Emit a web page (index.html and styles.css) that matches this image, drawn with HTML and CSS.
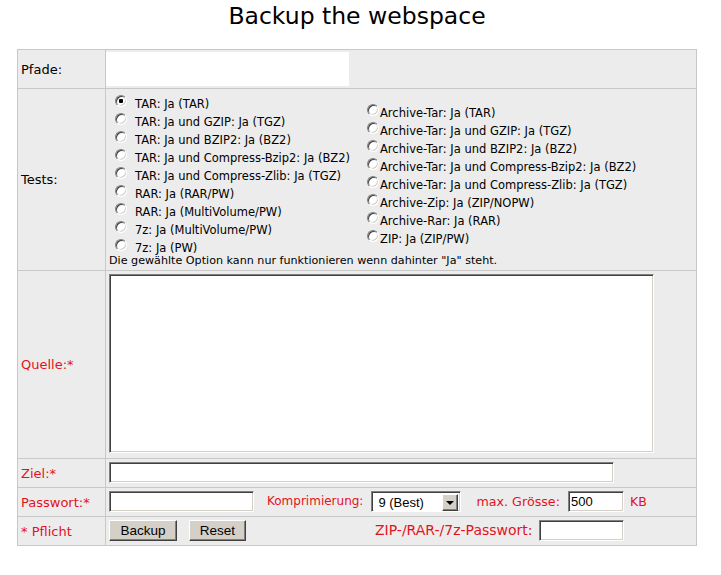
FILE: index.html
```html
<!DOCTYPE html>
<html lang="de">
<head>
<meta charset="utf-8">
<title>Backup the webspace</title>
<link rel="stylesheet" href="styles.css">
</head>
<body>
<div class="page">
  <h1 class="title">Backup the webspace</h1>
  <form class="grid">
    <div class="lbl">Pfade:</div>
    <div class="val val-pfade"><div class="pfade-box"></div></div>

    <div class="lbl">Tests:</div>
    <div class="val val-tests">
      <div class="cols">
        <div class="col col-left">
          <label class="opt"><input type="radio" name="t" checked><span>TAR: Ja (TAR)</span></label>
          <label class="opt"><input type="radio" name="t"><span>TAR: Ja und GZIP: Ja (TGZ)</span></label>
          <label class="opt"><input type="radio" name="t"><span>TAR: Ja und BZIP2: Ja (BZ2)</span></label>
          <label class="opt"><input type="radio" name="t"><span>TAR: Ja und Compress-Bzip2: Ja (BZ2)</span></label>
          <label class="opt"><input type="radio" name="t"><span>TAR: Ja und Compress-Zlib: Ja (TGZ)</span></label>
          <label class="opt"><input type="radio" name="t"><span>RAR: Ja (RAR/PW)</span></label>
          <label class="opt"><input type="radio" name="t"><span>RAR: Ja (MultiVolume/PW)</span></label>
          <label class="opt"><input type="radio" name="t"><span>7z: Ja (MultiVolume/PW)</span></label>
          <label class="opt"><input type="radio" name="t"><span>7z: Ja (PW)</span></label>
        </div>
        <div class="col col-right">
          <label class="opt"><input type="radio" name="t"><span>Archive-Tar: Ja (TAR)</span></label>
          <label class="opt"><input type="radio" name="t"><span>Archive-Tar: Ja und GZIP: Ja (TGZ)</span></label>
          <label class="opt"><input type="radio" name="t"><span>Archive-Tar: Ja und BZIP2: Ja (BZ2)</span></label>
          <label class="opt"><input type="radio" name="t"><span>Archive-Tar: Ja und Compress-Bzip2: Ja (BZ2)</span></label>
          <label class="opt"><input type="radio" name="t"><span>Archive-Tar: Ja und Compress-Zlib: Ja (TGZ)</span></label>
          <label class="opt"><input type="radio" name="t"><span>Archive-Zip: Ja (ZIP/NOPW)</span></label>
          <label class="opt"><input type="radio" name="t"><span>Archive-Rar: Ja (RAR)</span></label>
          <label class="opt"><input type="radio" name="t"><span>ZIP: Ja (ZIP/PW)</span></label>
        </div>
      </div>
      <div class="note">Die gewählte Option kann nur funktionieren wenn dahinter "Ja" steht.</div>
    </div>

    <div class="lbl red">Quelle:*</div>
    <div class="val val-quelle"><textarea class="area"></textarea></div>

    <div class="lbl red">Ziel:*</div>
    <div class="val val-row"><input class="field field-ziel" type="text"></div>

    <div class="lbl red">Passwort:*</div>
    <div class="val val-row">
      <input class="field field-pw" type="password">
      <span class="red txt-komp">Komprimierung:</span>
      <span class="select">
        <select class="sel">
          <option>9 (Best)</option>
          <option>8</option>
          <option>7</option>
          <option>6</option>
          <option>5</option>
          <option>4</option>
          <option>3</option>
          <option>2</option>
          <option>1</option>
          <option>0</option>
        </select>
        <span class="sel-btn"><span class="tri"></span></span>
      </span>
      <span class="red txt-max">max. Grösse:</span>
      <input class="field field-size" type="text" value="500">
      <span class="red txt-kb">KB</span>
    </div>

    <div class="lbl red">* Pflicht</div>
    <div class="val val-row">
      <button type="button" class="btn btn-backup">Backup</button>
      <button type="reset" class="btn btn-reset">Reset</button>
      <span class="red txt-zip">ZIP-/RAR-/7z-Passwort:</span>
      <input class="field field-zip" type="password">
    </div>
  </form>
</div>
</body>
</html>
```

FILE: styles.css
```css
* {
  box-sizing: border-box;
}

body {
  margin: 0;
  background: #fff;
  color: #000;
  font-family: "DejaVu Sans", Verdana, sans-serif;
}

.page {
  width: 680px;
  margin-left: 17px;
}

.title {
  margin: 2px 0 19px;
  font-size: 23.5px;
  line-height: 28px;
  font-weight: normal;
  text-align: center;
}

.grid {
  display: grid;
  grid-template-columns: 88px 591px;
  grid-template-rows: 39px 182px 188px 29px 29px 29px;
  border-top: 1px solid #c8c8c8;
  border-left: 1px solid #c8c8c8;
  background: #ececec;
  margin: 0;
}

.lbl,
.val {
  border-right: 1px solid #c8c8c8;
  border-bottom: 1px solid #c8c8c8;
}

.lbl {
  display: flex;
  align-items: center;
  padding-left: 3px;
  font-size: 13px;
}

.red {
  color: #e3121c;
}

.val {
  padding-left: 3px;
}

/* Pfade */
.val-pfade {
  display: flex;
  align-items: center;
  padding-left: 0;
}

.pfade-box {
  width: 243px;
  height: 34px;
  background: #fff;
}

/* Tests */
.val-tests {
  padding-top: 3px;
  font-size: 11.5px;
}

.cols {
  display: flex;
}

.col-left {
  width: 252px;
}

.col {
  display: flex;
  flex-direction: column;
}

.col-right {
  justify-content: center;
}

.opt {
  display: flex;
  align-items: flex-start;
  height: 18px;
  white-space: nowrap;
}

.opt span {
  line-height: 11px;
  padding-top: 7px;
}

.opt input {
  appearance: none;
  -webkit-appearance: none;
  width: 12px;
  height: 12px;
  margin: 3px 8px 0 6px;
  border-radius: 50%;
  border: 1px solid;
  border-color: #808080 #ffffff #ffffff #808080;
  box-shadow: inset 1px 1px 0 #404040, inset -1px -1px 0 #d4d0c8;
  background: #fff;
  flex: none;
}

.col-right .opt input {
  margin-right: 1px;
}

.opt input:checked {
  background: radial-gradient(circle, #000 0 2px, #fff 2.5px);
}

.note {
  font-size: 11.15px;
  line-height: 13px;
  white-space: nowrap;
}

/* Quelle */
.val-quelle {
  padding-top: 3px;
}

.area {
  display: block;
  width: 545px;
  height: 179px;
  margin: 0;
  resize: none;
  background: #fff;
  border: 1px solid;
  border-color: #808080 #ffffff #ffffff #808080;
  box-shadow: inset 1px 1px 0 #404040, inset -1px -1px 0 #d4d0c8;
}

/* inline rows */
.val-row {
  display: flex;
  align-items: flex-start;
  padding-top: 3px;
}

.val-row > span.red {
  line-height: 21px;
}

.field {
  height: 21px;
  margin: 0;
  padding: 0 2px;
  background: #fff;
  font-family: "Liberation Sans", Arial, sans-serif;
  font-size: 13px;
  color: #000;
  border: 1px solid;
  border-color: #808080 #ffffff #ffffff #808080;
  box-shadow: inset 1px 1px 0 #404040, inset -1px -1px 0 #d4d0c8;
  outline: none;
}

.field-ziel {
  width: 505px;
}

.field-pw {
  width: 145px;
}

.txt-komp {
  margin-left: 13px;
  font-size: 12px;
}

.select {
  display: flex;
  width: 90px;
  height: 21px;
  margin-left: 8px;
  padding: 2px;
  background: #fff;
  border: 1px solid;
  border-color: #808080 #ffffff #ffffff #808080;
  box-shadow: inset 1px 1px 0 #404040, inset -1px -1px 0 #d4d0c8;
}

.sel {
  appearance: none;
  -webkit-appearance: none;
  flex: 1;
  min-width: 0;
  height: 17px;
  margin: 0;
  padding: 0 0 0 4px;
  border: none;
  background: #fff;
  font-family: "Liberation Sans", Arial, sans-serif;
  font-size: 13px;
  line-height: 17px;
  color: #000;
  outline: none;
}

.sel-btn {
  display: flex;
  align-items: center;
  justify-content: center;
  width: 16px;
  height: 17px;
  background: #d4d0c8;
  border: 1px solid;
  border-color: #ffffff #404040 #404040 #ffffff;
  box-shadow: inset -1px -1px 0 #808080;
}

.tri {
  width: 0;
  height: 0;
  border-top: 4px solid #000;
  border-left: 4px solid transparent;
  border-right: 4px solid transparent;
  margin-left: -1px;
}

.txt-max {
  margin-left: 15px;
  font-size: 12.7px;
}

.field-size {
  width: 56px;
  margin-left: 8px;
}

.txt-kb {
  margin-left: 6px;
  font-size: 12.5px;
}

.btn {
  height: 21px;
  margin: 0;
  padding: 0;
  background: #d4d0c8;
  font-family: "Liberation Sans", Arial, sans-serif;
  font-size: 13.5px;
  color: #000;
  border: 1px solid;
  border-color: #ffffff #404040 #404040 #ffffff;
  box-shadow: inset -1px -1px 0 #808080;
}

.btn-backup {
  width: 68px;
}

.btn-reset {
  width: 57px;
  margin-left: 12px;
}

.txt-zip {
  margin-left: 129px;
  font-size: 14px;
}

.field-zip {
  width: 85px;
  margin-left: 6px;
}
```
